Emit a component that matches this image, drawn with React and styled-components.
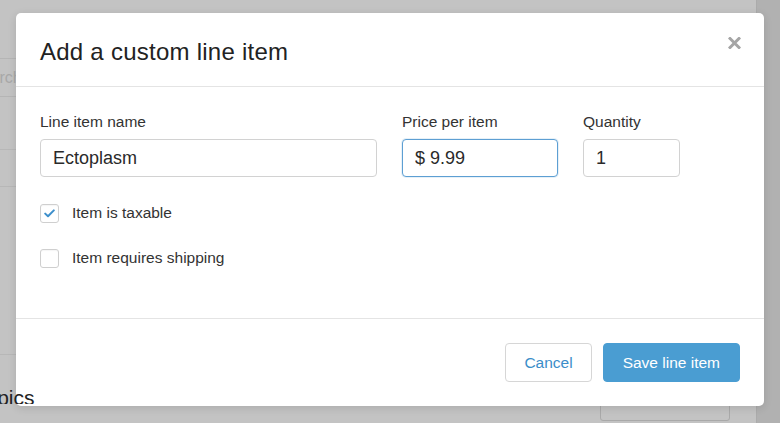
import React from "react";
import styled, { createGlobalStyle } from "styled-components";

const GlobalStyle = createGlobalStyle`
  html, body {
    margin: 0;
    padding: 0;
    background: #c3c3c3;
  }
  body {
    font-family: "Liberation Sans", Arial, Helvetica, sans-serif;
    color: #333;
  }
`;

/* ---------- dimmed page behind the dialog ---------- */

const Page = styled.div`
  position: relative;
  display: grid;
  grid-template-columns: 1fr 24px;
  width: 780px;
  height: 423px;
  overflow: hidden;
  background: #c3c3c3;
`;

const Main = styled.div`
  display: flex;
  flex-direction: column;
  padding-top: 58px;
`;

const Scrollbar = styled.div`
  background: #b1b1b1;
  border-left: 1px solid #ababab;
`;

const SearchRow = styled.div`
  height: 37px;
  border-top: 1px solid #b5b5b5;
  border-bottom: 1px solid #b5b5b5;
  font-size: 16px;
  line-height: 37px;
  color: #a8a8a8;
  white-space: nowrap;
  overflow: hidden;
`;

const Placeholder = styled.span`
  display: inline-block;
  margin-left: -29px;
`;

const ListRow = styled.div`
  height: 36px;
  margin-top: ${(p) => p.$gap}px;
  border-top: 1px solid #b7b7b7;
  border-bottom: 1px solid #b7b7b7;
`;

const Rule = styled.div`
  margin-top: ${(p) => p.$gap}px;
  border-top: 1px solid #b7b7b7;
`;

const SectionHead = styled.div`
  display: flex;
  justify-content: space-between;
  align-items: flex-start;
  margin-top: 33px;
  padding-right: 26px;
`;

const SectionTitle = styled.div`
  position: relative;
  z-index: 3;
  height: 16px;
  overflow: hidden;
  font-size: 21px;
  line-height: 20px;
  color: #232323;
  white-space: nowrap;
  span {
    display: inline-block;
    margin-left: -25px;
  }
`;

const GhostButton = styled.div`
  width: 128px;
  height: 30px;
  margin-top: 1px;
  border: 1px solid #a9a9a9;
  border-radius: 3px;
`;

/* ---------- dialog ---------- */

const Modal = styled.div`
  position: absolute;
  z-index: 2;
  top: 13px;
  left: 16px;
  width: 748px;
  height: 393px;
  display: flex;
  flex-direction: column;
  background: #fff;
  border-radius: 5px;
  box-shadow: 0 2px 8px rgba(0, 0, 0, 0.12);
`;

const Header = styled.div`
  display: flex;
  justify-content: space-between;
  align-items: center;
  height: 70px;
  padding: 3px 23px 0 24px;
  border-bottom: 1px solid #e4e4e4;
`;

const Title = styled.h2`
  margin: 0;
  font-size: 24px;
  font-weight: 400;
  line-height: 29px;
  letter-spacing: 0.25px;
  color: #222;
`;

const Close = styled.button`
  align-self: flex-start;
  margin-top: 21px;
  padding: 0;
  border: 0;
  background: none;
  line-height: 0;
  cursor: pointer;
`;

const Body = styled.div`
  flex: 1;
  padding: 25px 24px 0;
`;

const FieldRow = styled.div`
  display: flex;
  gap: 25px;
`;

const Field = styled.label`
  display: flex;
  flex-direction: column;
  width: ${(p) => p.$width}px;
`;

const FieldLabel = styled.span`
  margin-bottom: 7px;
  font-size: 15.5px;
  line-height: 20px;
  color: #333;
`;

const Input = styled.input`
  box-sizing: border-box;
  height: 38px;
  width: 100%;
  padding: 0 12px;
  border: 1px solid ${(p) => (p.$focused ? "#5d9fd3" : "#d2d2d2")};
  border-radius: 4px;
  font-family: inherit;
  font-size: 18px;
  color: #2a2a2a;
  outline: none;
  box-shadow: ${(p) => (p.$focused ? "0 0 0 1px rgba(93,159,211,0.15)" : "none")};
`;

const Checks = styled.div`
  display: flex;
  flex-direction: column;
  gap: 25px;
  margin-top: 26px;
`;

const CheckRow = styled.label`
  display: flex;
  align-items: center;
  gap: 13px;
  height: 20px;
  font-size: 15.5px;
  color: #333;
`;

const Box = styled.span`
  box-sizing: border-box;
  display: flex;
  align-items: center;
  justify-content: center;
  width: 19px;
  height: 19px;
  border: 1px solid #cfcfcf;
  border-radius: 3px;
  background: #fff;
  box-shadow: inset 0 1px 1px rgba(0, 0, 0, 0.04);
`;

const Footer = styled.div`
  display: flex;
  justify-content: flex-end;
  gap: 11px;
  padding: 24px;
  border-top: 1px solid #e4e4e4;
`;

const Button = styled.button`
  height: 39px;
  padding: 0 ${(p) => (p.$primary ? 19 : 18)}px;
  border: 1px solid ${(p) => (p.$primary ? "#4a9dd2" : "#d6d6d6")};
  border-radius: 4px;
  background: ${(p) => (p.$primary ? "#4a9dd2" : "#fff")};
  color: ${(p) => (p.$primary ? "#fff" : "#3b8dc9")};
  font-family: inherit;
  font-size: 15.5px;
  cursor: pointer;
`;

const CheckMark = () => (
  <svg width="11" height="9" viewBox="0 0 11 9" fill="none">
    <path d="M1.2 4.6 L4 7.3 L9.8 1.4" stroke="#3d8fcb" strokeWidth="2" strokeLinecap="round" strokeLinejoin="round" />
  </svg>
);

const CloseIcon = () => (
  <svg width="13" height="12" viewBox="0 0 13 12" fill="none">
    <path d="M2 1.5 L11 10.5 M11 1.5 L2 10.5" stroke="#a5a5a5" strokeWidth="3" strokeLinecap="square" />
  </svg>
);

export default function App() {
  return (
    <>
      <GlobalStyle />
      <Page>
        <Main>
          <SearchRow>
            <Placeholder>Search</Placeholder>
          </SearchRow>
          <ListRow $gap={52} />
          <Rule $gap={167} />
          <SectionHead>
            <SectionTitle>
              <span>Topics</span>
            </SectionTitle>
            <GhostButton />
          </SectionHead>
        </Main>
        <Scrollbar />

        <Modal role="dialog" aria-label="Add a custom line item">
          <Header>
            <Title>Add a custom line item</Title>
            <Close aria-label="Close">
              <CloseIcon />
            </Close>
          </Header>
          <Body>
            <FieldRow>
              <Field $width={337}>
                <FieldLabel>Line item name</FieldLabel>
                <Input defaultValue="Ectoplasm" />
              </Field>
              <Field $width={156}>
                <FieldLabel>Price per item</FieldLabel>
                <Input $focused defaultValue="$ 9.99" />
              </Field>
              <Field $width={97}>
                <FieldLabel>Quantity</FieldLabel>
                <Input defaultValue="1" />
              </Field>
            </FieldRow>
            <Checks>
              <CheckRow>
                <Box>
                  <CheckMark />
                </Box>
                Item is taxable
              </CheckRow>
              <CheckRow>
                <Box />
                Item requires shipping
              </CheckRow>
            </Checks>
          </Body>
          <Footer>
            <Button>Cancel</Button>
            <Button $primary>Save line item</Button>
          </Footer>
        </Modal>
      </Page>
    </>
  );
}
